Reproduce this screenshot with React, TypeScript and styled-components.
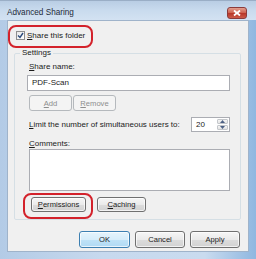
import React from 'react'
import styled, { createGlobalStyle } from 'styled-components'

const GlobalStyle = createGlobalStyle`
  html, body {
    margin: 0;
    padding: 0;
    background: #ffffff;
  }
  body {
    font-family: 'Liberation Sans', Arial, sans-serif;
    font-size: 8px;
    color: #1b1b1b;
  }
`

const Window = styled.div`
  position: relative;
  width: 256px;
  height: 259px;
  box-sizing: border-box;
  padding: 0 7px 7px 7px;
  display: flex;
  flex-direction: column;
  background: linear-gradient(90deg, #b3cbe6 0%, #c7d9ee 40%, #c9dbef 80%, #8fb7e0 100%);
  border-top: 1px solid #9aaec6;
  overflow: hidden;
`

const TitleBar = styled.div`
  height: 19px;
  margin: 0 -7px;
  padding: 0 9px 0 7px;
  display: flex;
  justify-content: space-between;
  align-items: flex-start;
  background: linear-gradient(180deg, #b9cde4 0%, #c9dbee 50%, #d3e2f2 100%);
`

const Title = styled.span`
  margin-top: 7px;
  font-size: 8.2px;
  color: #1e2a3a;
`

const CloseButton = styled.div`
  width: 20px;
  height: 12px;
  margin-top: 6px;
  box-sizing: border-box;
  border: 1px solid #8b3b3b;
  border-radius: 3px;
  background: linear-gradient(180deg, #e3a090 0%, #cf6452 45%, #b8382a 55%, #cc5a48 100%);
  display: flex;
  align-items: center;
  justify-content: center;
`

const Body = styled.div`
  flex: 1;
  background: #f0f0f0;
  border: 1px solid #9fb3ca;
  display: flex;
  flex-direction: column;
`

const CheckRow = styled.label`
  height: 16px;
  margin-top: 6px;
  padding-left: 8px;
  display: flex;
  align-items: center;
  gap: 2px;
`

const CheckBox = styled.span`
  width: 9px;
  height: 9px;
  box-sizing: border-box;
  border: 1px solid #8e8f8f;
  background: linear-gradient(135deg, #e8e8e8 0%, #ffffff 100%);
  display: flex;
  align-items: center;
  justify-content: center;
`

const Group = styled.fieldset`
  margin: 5px 7px 0 6px;
  padding: 4px 10px 7px 14px;
  border: 1px solid #d5dfe5;
  border-radius: 2px;
  min-width: 0;
  display: flex;
  flex-direction: column;
`

const Legend = styled.legend`
  padding: 0 2px;
  margin-left: -9px;
  line-height: 10px;
  font-size: 8px;
`

const Label = styled.div<{ $top?: number }>`
  line-height: 10px;
  margin-top: ${p => p.$top ?? 0}px;
`

const TextBox = styled.div<{ $height: number; $top: number; $left?: number }>`
  height: ${p => p.$height}px;
  margin-top: ${p => p.$top}px;
  margin-left: ${p => p.$left ?? 0}px;
  box-sizing: border-box;
  background: #ffffff;
  border: 1px solid #abadb3;
  padding: 2px 4px;
  line-height: 10px;
`

const ButtonRow = styled.div<{ $top: number; $gap: number; $left?: number; $right?: number; $end?: boolean }>`
  display: flex;
  gap: ${p => p.$gap}px;
  margin-top: ${p => p.$top}px;
  padding-left: ${p => p.$left ?? 0}px;
  padding-right: ${p => p.$right ?? 0}px;
  justify-content: ${p => (p.$end ? 'flex-end' : 'flex-start')};
`

const Button = styled.div<{ $width: number; $height: number; $disabled?: boolean; $default?: boolean }>`
  width: ${p => p.$width}px;
  height: ${p => p.$height}px;
  box-sizing: border-box;
  border-radius: 3px;
  display: flex;
  align-items: center;
  justify-content: center;
  font-size: 7.6px;
  border: 1px solid ${p => (p.$disabled ? '#b5b9bd' : p.$default ? '#3c7fb1' : '#707070')};
  color: ${p => (p.$disabled ? '#8d8d8d' : '#1b1b1b')};
  background: ${p =>
    p.$disabled
      ? '#f4f4f4'
      : p.$default
      ? 'linear-gradient(180deg, #e5f4fc 0%, #d6edfa 50%, #bfe2f7 51%, #b0daf4 100%)'
      : 'linear-gradient(180deg, #f6f6f6 0%, #eaeaea 50%, #dcdcdc 51%, #d2d2d2 100%)'};
  box-shadow: inset 0 0 0 1px ${p => (p.$disabled ? 'transparent' : 'rgba(255,255,255,0.7)')};
`

const LimitRow = styled.div`
  display: flex;
  align-items: center;
  justify-content: space-between;
  height: 15px;
  margin-top: 6px;
`

const Spinner = styled.div`
  width: 39px;
  height: 15px;
  box-sizing: border-box;
  border: 1px solid #abadb3;
  background: #ffffff;
  display: flex;
`

const SpinValue = styled.div`
  flex: 1;
  padding-left: 4px;
  line-height: 13px;
`

const SpinArrows = styled.div`
  width: 11px;
  display: flex;
  flex-direction: column;
  gap: 1px;
  padding: 1px 1px 1px 0;
`

const SpinArrow = styled.div`
  flex: 1;
  border: 1px solid #c4c7cb;
  border-radius: 1px;
  background: linear-gradient(180deg, #f5f5f5 0%, #e3e3e3 100%);
  display: flex;
  align-items: center;
  justify-content: center;
`

const Highlight = styled.div<{ $x: number; $y: number; $w: number; $h: number }>`
  position: absolute;
  left: ${p => p.$x}px;
  top: ${p => p.$y}px;
  width: ${p => p.$w}px;
  height: ${p => p.$h}px;
  box-sizing: border-box;
  border: 2.5px solid #d3222b;
  border-radius: 8px;
  pointer-events: none;
`

const Key = styled.span`
  text-decoration: underline;
`

const Tri = ({ up }: { up?: boolean }) => (
  <svg width="5" height="3" viewBox="0 0 5 3">
    <path d={up ? 'M0 3 L2.5 0 L5 3 Z' : 'M0 0 L2.5 3 L5 0 Z'} fill="#4d6185" />
  </svg>
)

export default function App() {
  return (
    <>
      <GlobalStyle />
      <Window>
        <TitleBar>
          <Title>Advanced Sharing</Title>
          <CloseButton>
            <svg width="8" height="6" viewBox="0 0 8 6">
              <path d="M1 0.5 L7 5.5 M7 0.5 L1 5.5" stroke="#ffffff" strokeWidth="1.8" />
            </svg>
          </CloseButton>
        </TitleBar>
        <Body>
          <CheckRow>
            <CheckBox>
              <svg width="7" height="7" viewBox="0 0 7 7">
                <path d="M1 3.5 L3 5.5 L6 1" stroke="#2a4a7c" strokeWidth="1.4" fill="none" />
              </svg>
            </CheckBox>
            <span>
              <Key>S</Key>hare this folder
            </span>
          </CheckRow>
          <Group>
            <Legend>Settings</Legend>
            <Label>
              <Key>S</Key>hare name:
            </Label>
            <TextBox $height={16} $top={3} $left={-2}>
              PDF-Scan
            </TextBox>
            <ButtonRow $top={4} $gap={1}>
              <Button $width={43} $height={16} $disabled>
                <span>
                  <Key>A</Key>dd
                </span>
              </Button>
              <Button $width={43} $height={16} $disabled>
                <span>
                  <Key>R</Key>emove
                </span>
              </Button>
            </ButtonRow>
            <LimitRow>
              <span>
                <Key>L</Key>imit the number of simultaneous users to:
              </span>
              <Spinner>
                <SpinValue>20</SpinValue>
                <SpinArrows>
                  <SpinArrow>
                    <Tri up />
                  </SpinArrow>
                  <SpinArrow>
                    <Tri />
                  </SpinArrow>
                </SpinArrows>
              </Spinner>
            </LimitRow>
            <Label $top={7}>
              <Key>C</Key>omments:
            </Label>
            <TextBox $height={42} $top={0} />
            <ButtonRow $top={6} $gap={11} $left={2}>
              <Button $width={55} $height={15}>
                <span>
                  <Key>P</Key>ermissions
                </span>
              </Button>
              <Button $width={49} $height={15}>
                <span>
                  <Key>C</Key>aching
                </span>
              </Button>
            </ButtonRow>
          </Group>
          <ButtonRow $top={11} $gap={5} $right={8} $end>
            <Button $width={51} $height={17} $default>
              OK
            </Button>
            <Button $width={50} $height={17}>
              Cancel
            </Button>
            <Button $width={50} $height={17}>
              Apply
            </Button>
          </ButtonRow>
        </Body>
        <Highlight $x={8} $y={24} $w={85} $h={23} />
        <Highlight $x={23} $y={192} $w={70} $h={26} />
      </Window>
    </>
  )
}
